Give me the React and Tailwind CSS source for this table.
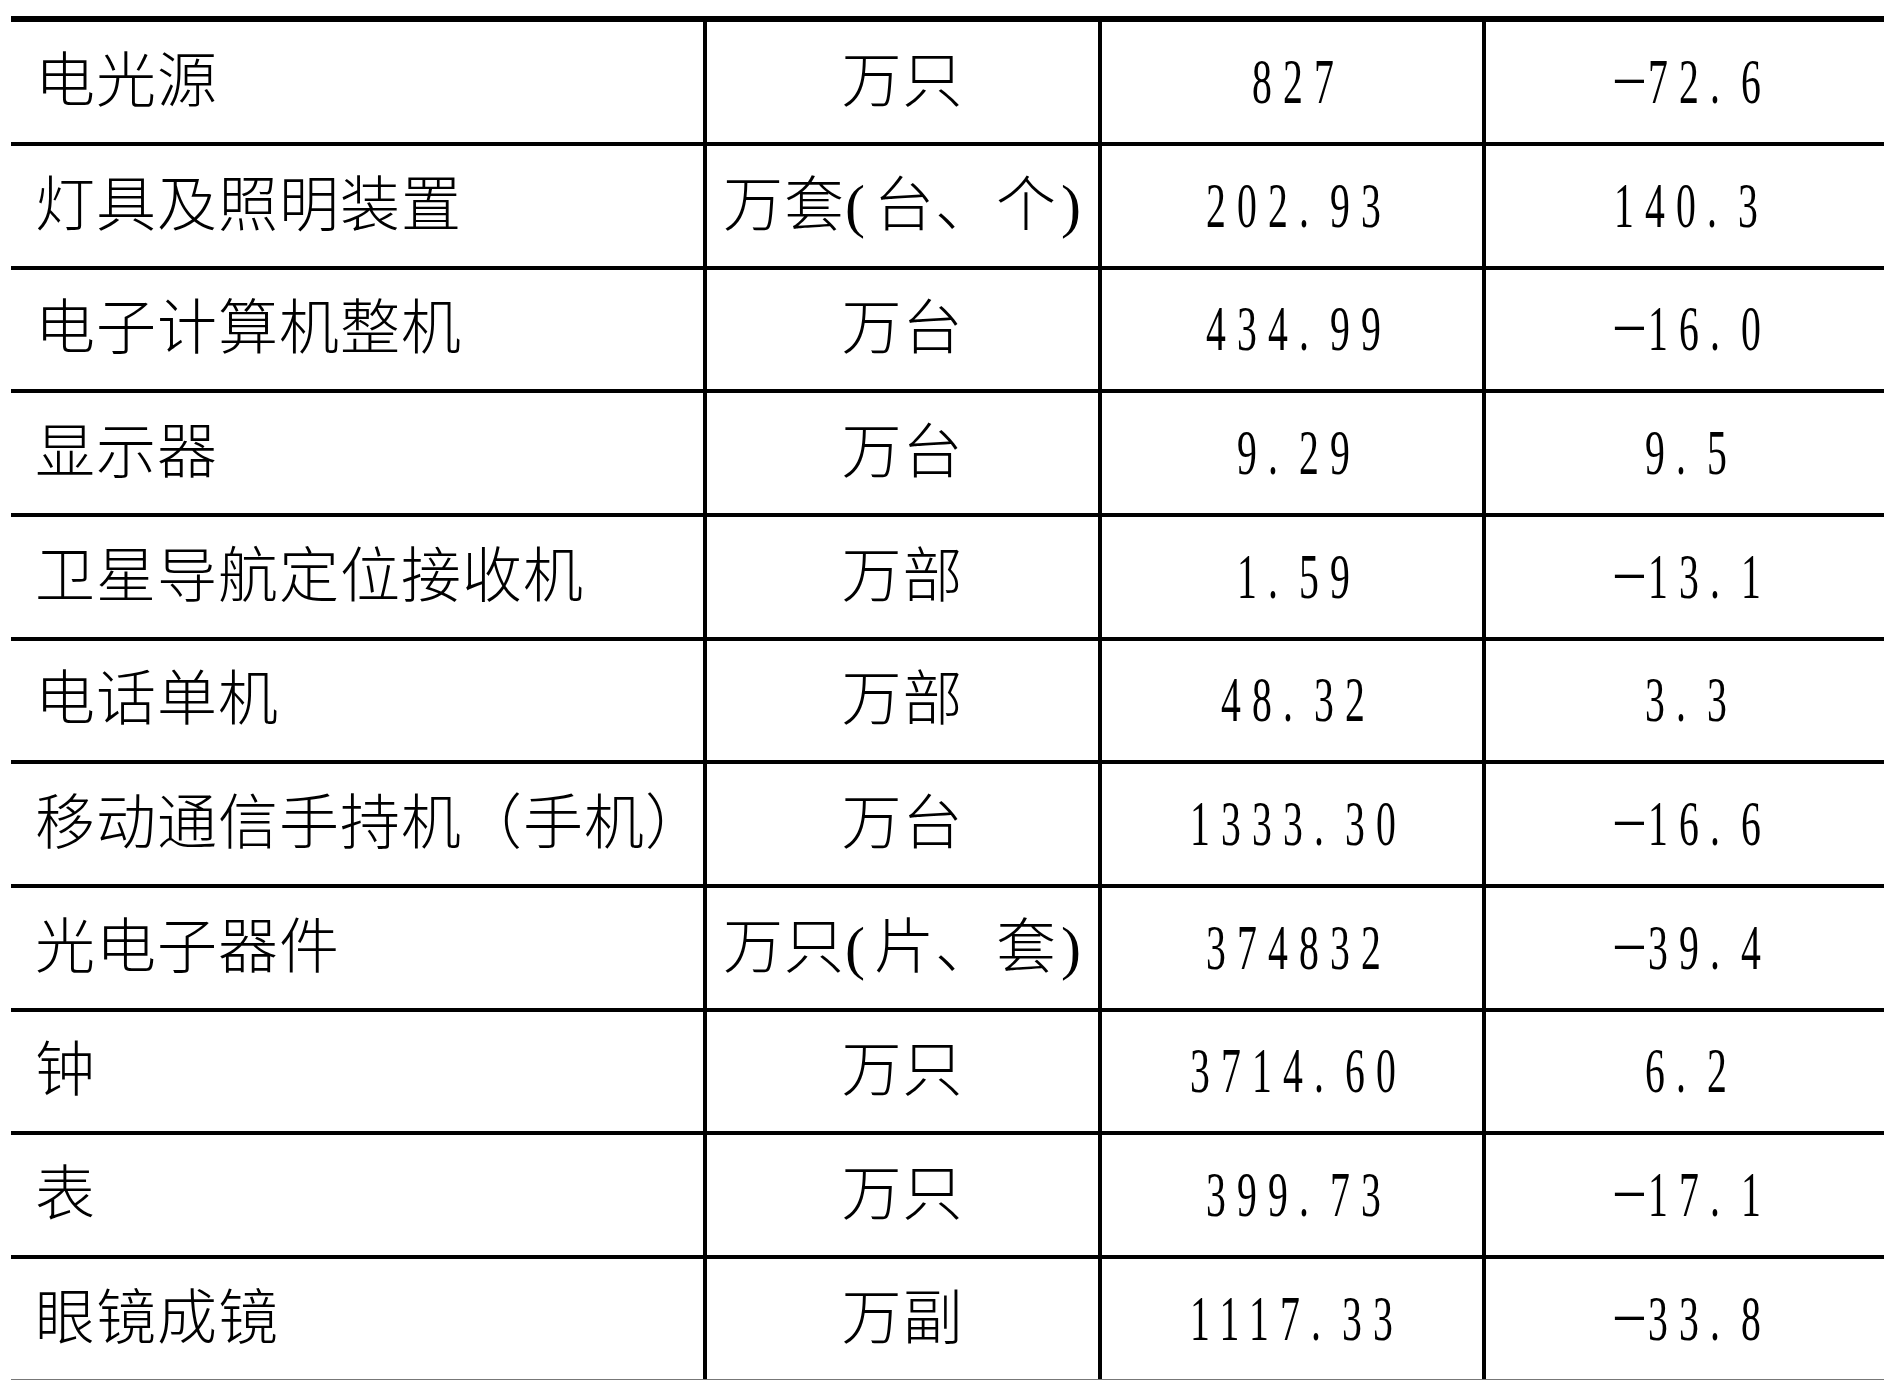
// 2023年电子产品产量表（局部）
const ROWS = [
    ['电光源', '万只', '827', '-72.6'],
    ['灯具及照明装置', '万套(台、个)', '202.93', '140.3'],
    ['电子计算机整机', '万台', '434.99', '-16.0'],
    ['显示器', '万台', '9.29', '9.5'],
    ['卫星导航定位接收机', '万部', '1.59', '-13.1'],
    ['电话单机', '万部', '48.32', '3.3'],
    ['移动通信手持机（手机）', '万台', '1333.30', '-16.6'],
    ['光电子器件', '万只(片、套)', '374832', '-39.4'],
    ['钟', '万只', '3714.60', '6.2'],
    ['表', '万只', '399.73', '-17.1'],
    ['眼镜成镜', '万副', '1117.33', '-33.8'],
];

const cjk = "font-['Liberation_Serif','Noto_Sans_CJK_SC',serif] font-light text-[60px] leading-none tracking-[1px] text-black whitespace-nowrap";

// narrow, evenly spaced digits like the printed table
const Num = ({ value }) => {
    const neg = value.startsWith('-');
    const body = neg ? value.slice(1) : value;
    const [int, frac] = body.split('.');
    return (
        <span className="flex items-center font-['Liberation_Serif',serif] text-[64px] leading-none text-black">
            {neg && <span className="inline-block w-[37px] text-center scale-x-[1.75] scale-y-[0.7] -translate-y-[5px]">-</span>}
            <span className="inline-block scale-x-[0.62] tracking-[18px] -mr-[18px] origin-left w-fit">
                {int}
                {frac !== undefined && <span className="pr-[16px]">.</span>}
                {frac}
            </span>
        </span>
    );
};

// unit text: half-width brackets get a little air, as in print
const Unit = ({ text }) => {
    const m = text.match(/^(.*)\((.*)\)$/);
    if (!m) return <span className={cjk}>{text}</span>;
    return (
        <span className={`${cjk} flex items-center`}>
            {m[1]}
            <span className="pr-[8px]">(</span>
            {m[2]}
            <span className="pl-[4px]">)</span>
        </span>
    );
};

const Row = ({ item, idx }) => {
    const last = idx === ROWS.length - 1;
    const h = idx === 0 ? 'h-[124px]' : last ? 'h-[121px]' : 'h-[123.67px]';
    const bottom = last ? 'border-b border-[#777]' : 'border-b-4 border-black';
    return (
        <div className={`flex ${h} ${bottom}`}>
            <div className="w-[696px] shrink-0 border-r-4 border-black flex items-center pl-[24px]">
                <span className={cjk}>{item[0]}</span>
            </div>
            <div className="w-[395px] shrink-0 border-r-4 border-black flex items-center justify-center">
                <Unit text={item[1]} />
            </div>
            <div className="w-[384px] shrink-0 border-r-4 border-black flex items-center justify-center">
                <NumBox value={item[2]} />
            </div>
            <div className="flex-1 flex items-center justify-center">
                <NumBox value={item[3]} />
            </div>
        </div>
    );
};

// width of the scaled number so it can be centred on its ink
const NumBox = ({ value }) => {
    const neg = value.startsWith('-');
    const chars = value.length - (neg ? 1 : 0);
    const w = chars * 31 - 13 + (neg ? 37 : 0);
    return (
        <div className="flex justify-start overflow-visible" style={{ width: w }}>
            <Num value={value} />
        </div>
    );
};

export default function App() {
    return (
        <div className="w-full h-[1380px] bg-white overflow-hidden pt-[16px] pl-[11px]">
            <div className="w-[1873px] border-t-[6px] border-black">
                {ROWS.map((item, i) => (
                    <Row key={i} item={item} idx={i} />
                ))}
            </div>
        </div>
    );
}
